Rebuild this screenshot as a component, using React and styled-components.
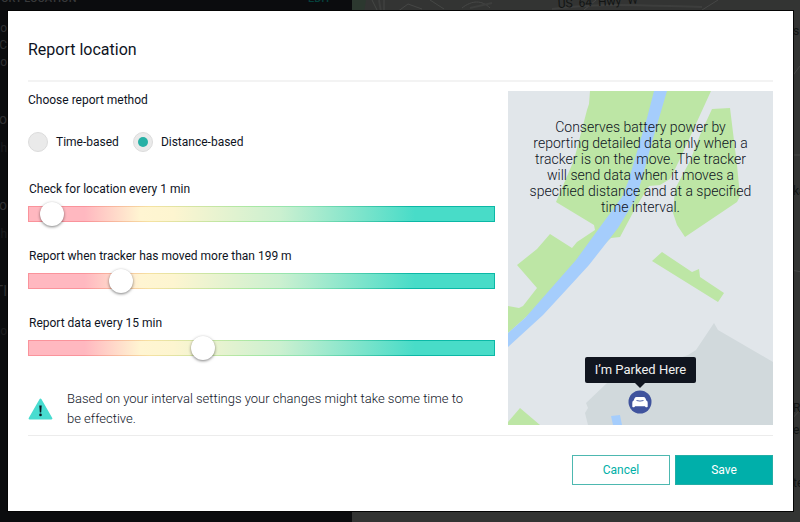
import React, { useState } from "react";
import styled, { createGlobalStyle } from "styled-components";

const GlobalStyle = createGlobalStyle`
  *, *::before, *::after { box-sizing: border-box; }
  body {
    margin: 0;
    background: #333333;
    color: #0e131e;
    font-family: Roboto, "Noto Sans", sans-serif;
    font-size: 12px;
    line-height: 16px;
  }
`;

const Page = styled.div`
  position: relative;
  overflow: hidden;
`;

/* Dimmed page that lies behind the dialog */
const Backdrop = styled.div`
  position: absolute;
  inset: 0;
  display: grid;
  grid-template-columns: 44% 1fr;
  overflow: hidden;
`;

const Sidebar = styled.div`
  background: #0b0c0e;
  color: #38393b;
  overflow: hidden;
`;

const SidebarHeader = styled.div`
  display: flex;
  justify-content: space-between;
  margin: -9px 21px 0 1px;
  font-size: 11px;
  line-height: 16px;
  font-weight: 500;
`;

const EditLabel = styled.span`
  color: #06413d;
`;

const SidebarList = styled.div`
  display: flex;
  flex-direction: column;
  width: 7px;
  padding-top: 13px;
`;

const SidebarLine = styled.div`
  display: flex;
  justify-content: flex-end;
  height: ${(p) => p.$height}px;
  font-size: ${(p) => (p.$large ? 14 : 12)}px;
  color: ${(p) => (p.$faint ? "#1b1c1e" : "#2f3032")};
  overflow: hidden;
`;

const BackdropMap = styled.svg`
  display: block;
  width: 100%;
  height: 100%;
  background: #333433;
  font-size: 12px;
`;

const Dialog = styled.section`
  position: relative;
  margin: 11px 7px 11px 8px;
  padding: 29px 20px 26px;
  background: #ffffff;
  box-shadow: 0 0 0 1px #050505;
`;

const DialogHeader = styled.header`
  padding-bottom: 20px;
  border-bottom: 2px solid #f3f3f3;
`;

const Title = styled.h1`
  margin: 0;
  font-size: 16px;
  line-height: 20px;
  font-weight: 400;
`;

const DialogBody = styled.div`
  display: grid;
  grid-template-columns: 1fr 265px;
  gap: 13px;
  align-items: start;
  padding: 9px 0 6px;
`;

const Settings = styled.div`
  display: flex;
  flex-direction: column;
  gap: 29px;
  padding-top: 1px;
`;

const MethodGroup = styled.fieldset`
  margin: 0;
  padding: 0;
  border: 0;
`;

const MethodLegend = styled.legend`
  padding: 0;
  margin-bottom: 24px;
`;

const MethodOptions = styled.div`
  display: flex;
  gap: 14px;
`;

const RadioLabel = styled.label`
  display: flex;
  align-items: center;
  gap: 8px;
  cursor: pointer;
`;

const RadioInput = styled.input`
  appearance: none;
  display: grid;
  place-items: center;
  width: 20px;
  height: 20px;
  margin: 0;
  border: 1px solid #dcdcdc;
  border-radius: 50%;
  background: #eaeaea;

  &:checked::before {
    content: "";
    width: 10px;
    height: 10px;
    border-radius: 50%;
    background: #27b0a5;
  }
`;

const SliderList = styled.div`
  display: flex;
  flex-direction: column;
  gap: 22px;
`;

const SliderField = styled.div`
  display: flex;
  flex-direction: column;
  gap: 5px;
`;

const SliderLabel = styled.label`
  padding-left: 1px;
`;

const SliderInput = styled.input`
  appearance: none;
  display: block;
  width: 100%;
  height: 24px;
  margin: 0;
  background: transparent;

  &::-webkit-slider-runnable-track {
    height: 16px;
    border: 1px solid transparent;
    background:
      linear-gradient(90deg, #ffb8c0 12%, #fff5d2 24%, #fdf5d0 31%, #cbf0d0 54%, #48dcc8 83%) padding-box,
      linear-gradient(90deg, #fa939b 12%, #f6e2a2 26%, #a9e8a4 48%, #8be3b4 60%, #0bb8a6 82%) border-box;
  }

  &::-webkit-slider-thumb {
    appearance: none;
    width: 24px;
    height: 24px;
    margin-top: -5px;
    border-radius: 50%;
    background: #ffffff;
    box-shadow: 0 1px 3px rgba(0, 0, 0, 0.5);
  }
`;

const Notice = styled.div`
  display: flex;
  align-items: center;
  gap: 14px;
`;

const NoticeIcon = styled.svg`
  flex: none;
  width: 25px;
  height: 24px;
`;

const NoticeText = styled.p`
  margin: 0;
  max-width: 410px;
  font-size: 13px;
  font-weight: 300;
  line-height: 20px;
  color: #10151f;
`;

const MapPanel = styled.div`
  position: relative;
  display: flex;
  flex-direction: column;
  align-items: center;
  justify-content: space-between;
  min-height: 334px;
  padding: 28px 18px 11px;
  overflow: hidden;
`;

const MapDrawing = styled.svg`
  position: absolute;
  inset: 0;
  width: 100%;
  height: 100%;
`;

const MapText = styled.p`
  position: relative;
  margin: 0;
  text-align: center;
  font-size: 14px;
  font-weight: 300;
  line-height: 16px;
`;

const Marker = styled.div`
  position: relative;
  display: flex;
  flex-direction: column;
  align-items: center;
`;

const Bubble = styled.div`
  padding: 5px 10px;
  border-radius: 2px;
  background: #10151f;
  color: #f1f1f1;
  font-size: 13px;
  line-height: 16px;
`;

const BubbleArrow = styled.div`
  border: 5px solid transparent;
  border-top-color: #10151f;
  border-bottom: 0;
  margin-bottom: 2px;
`;

const CarBadge = styled.svg`
  width: 24px;
  height: 24px;
`;

const DialogFooter = styled.footer`
  display: flex;
  justify-content: flex-end;
  gap: 5px;
  padding-top: 19px;
  border-top: 1px solid #ececec;
`;

const Button = styled.button`
  width: 98px;
  height: 30px;
  padding: 0;
  border: 1px solid ${(p) => (p.$primary ? "#22aea6" : "#4db8b0")};
  background: ${(p) => (p.$primary ? "#00afaa" : "#ffffff")};
  color: ${(p) => (p.$primary ? "#ffffff" : "#00afa7")};
  font: 400 12px/16px Roboto, "Noto Sans", sans-serif;
  cursor: pointer;
`;

const sidebarLines = [
  { text: "o", height: 17 },
  { text: "C", height: 17 },
  { text: "o", height: 57 },
  { text: "o", height: 29, large: true },
  { text: "h", height: 57, faint: true },
  { text: "o", height: 29, large: true },
  { text: "h", height: 57, faint: true },
  { text: "TI", height: 40, large: true },
  { text: "o", height: 17, faint: true },
];

function AreaMap() {
  return (
    <MapDrawing viewBox="0 0 265 334" preserveAspectRatio="none" aria-hidden="true">
      <rect width="265" height="334" fill="#e1e6ea" />
      <path
        fill="#bde6a5"
        d="M82 0 81 13 79 19 66 69 48 111 86 134 87 139 75 147 69 151 64 157 42 143 29 158 9 174 29 197 15 215 11 217 0 215V242L17 227 103 147 112 146 128 116 141 95 152 94 162 88 171 70 203 0Z"
      />
      <path fill="#bde6a5" d="M204 18 222 17 229 74 232 105 229 111 177 146 169 134 165 122 167 98 182 70 192 44Z" />
      <path fill="#bde6a5" d="M144 170 154 161 166 169 184 181 191 178 192 186 216 202 210 211Z" />
      <path
        fill="#a5cdfc"
        d="M146 0H159L144 51 133 91 127 109 110 137 81 174 59 198 35 224 0 256V242L17 227 68 169 92 136 114 106 120 91 139 27Z"
      />
      <path
        fill="#d1d9dc"
        d="M206 232 210 239 265 271V334H80L77 322 80 317 78 312 99 292 140 278 180 264 188 259Z"
      />
      <path fill="#bde6a5" d="M12 317 0 331V334H32Z" />
      <path fill="#a5cdfc" d="M103 325 112 324 114 334H105Z" />
    </MapDrawing>
  );
}

function DimmedMap() {
  return (
    <BackdropMap aria-hidden="true">
      <path fill="#293a2e" d="M0 0H14L12 12H0Z" opacity=".7" />
      <path
        fill="none"
        stroke="#464746"
        d="M20 0 26 12M32 0V12M45 12 56 4 70 9M78 0 92 9M110 8C120 0 130 0 138 8M232 10 244 0M350 10 366 0M439 78 448 66M439 155H450M439 270 450 272M439 420 448 410"
      />
      <path fill="none" stroke="#3d3e3d" strokeWidth="2" d="M27 0 29 12M118 8 140 3M200 9C250 2 300 6 350 7" />
      <g fill="#121413">
        <text x="206" y="8" transform="rotate(-3 206 8)">US&nbsp; 64&nbsp; Hwy&nbsp; W</text>
        <text x="441" y="35">s</text>
        <text x="441" y="195">ka</text>
        <text x="441" y="412">RL</text>
        <text x="441" y="434">en</text>
        <text x="441" y="487">te</text>
      </g>
    </BackdropMap>
  );
}

function Slider({ id, label, initial }) {
  const [value, setValue] = useState(initial);
  return (
    <SliderField>
      <SliderLabel htmlFor={id}>{label}</SliderLabel>
      <SliderInput
        id={id}
        type="range"
        min="0"
        max="1000"
        value={value}
        onChange={(e) => setValue(Number(e.target.value))}
      />
    </SliderField>
  );
}

export default function App() {
  const [method, setMethod] = useState("distance");
  return (
    <Page>
      <GlobalStyle />
      <Backdrop aria-hidden="true">
        <Sidebar>
          <SidebarHeader>
            <span>ORT LOCATION</span>
            <EditLabel>EDIT</EditLabel>
          </SidebarHeader>
          <SidebarList>
            {sidebarLines.map((line, i) => (
              <SidebarLine key={i} $height={line.height} $large={line.large} $faint={line.faint}>
                {line.text}
              </SidebarLine>
            ))}
          </SidebarList>
        </Sidebar>
        <DimmedMap />
      </Backdrop>

      <Dialog role="dialog" aria-modal="true" aria-labelledby="dialog-title">
        <DialogHeader>
          <Title id="dialog-title">Report location</Title>
        </DialogHeader>

        <DialogBody>
          <Settings>
            <MethodGroup>
              <MethodLegend>Choose report method</MethodLegend>
              <MethodOptions>
                <RadioLabel>
                  <RadioInput
                    type="radio"
                    name="method"
                    checked={method === "time"}
                    onChange={() => setMethod("time")}
                  />
                  Time-based
                </RadioLabel>
                <RadioLabel>
                  <RadioInput
                    type="radio"
                    name="method"
                    checked={method === "distance"}
                    onChange={() => setMethod("distance")}
                  />
                  Distance-based
                </RadioLabel>
              </MethodOptions>
            </MethodGroup>

            <SliderList>
              <Slider id="check-interval" label="Check for location every 1 min" initial={26} />
              <Slider id="move-distance" label="Report when tracker has moved more than 199 m" initial={181} />
              <Slider id="report-interval" label="Report data every 15 min" initial={368} />
            </SliderList>

            <Notice>
              <NoticeIcon viewBox="0 0 25 24" aria-hidden="true">
                <path
                  d="M12.5 2.5 23.4 21.5H1.6Z"
                  fill="#48dcd0"
                  stroke="#48dcd0"
                  strokeWidth="2"
                  strokeLinejoin="round"
                />
                <path d="M11.3 8.5h2.4l-.5 7h-1.4Z" fill="#0e131e" />
                <circle cx="12.5" cy="17.9" r="1.3" fill="#0e131e" />
              </NoticeIcon>
              <NoticeText>
                Based on your interval settings your changes might take some time to be effective.
              </NoticeText>
            </Notice>
          </Settings>

          <MapPanel>
            <AreaMap />
            <MapText>
              Conserves battery power by reporting detailed data only when a tracker is on the move. The tracker will
              send data when it moves a specified distance and at a specified time interval.
            </MapText>
            <Marker>
              <Bubble>I’m Parked Here</Bubble>
              <BubbleArrow />
              <CarBadge viewBox="0 0 24 24" aria-hidden="true">
                <circle cx="12" cy="12" r="11.5" fill="#3f539d" />
                <path
                  fill="#ffffff"
                  d="M8.500 7h7q1.300 0 1.900 1.200l.9 2.300q1.400.5 1.400 2.200v3.800q0 .8-.8.8h-.9q-.7 0-.9-.7l-.1-.4H7l-.1.400q-.2.7-.9.7H5.100q-.8 0-.8-.8v-3.800q0-1.700 1.400-2.200l.9-2.300Q7.200 7 8.500 7Z"
                />
                <path d="M8.500 10.500Q12 11.700 15.500 10.500" fill="none" stroke="#3f539d" strokeWidth="0.9" />
              </CarBadge>
            </Marker>
          </MapPanel>
        </DialogBody>

        <DialogFooter>
          <Button type="button">Cancel</Button>
          <Button type="button" $primary>
            Save
          </Button>
        </DialogFooter>
      </Dialog>
    </Page>
  );
}
